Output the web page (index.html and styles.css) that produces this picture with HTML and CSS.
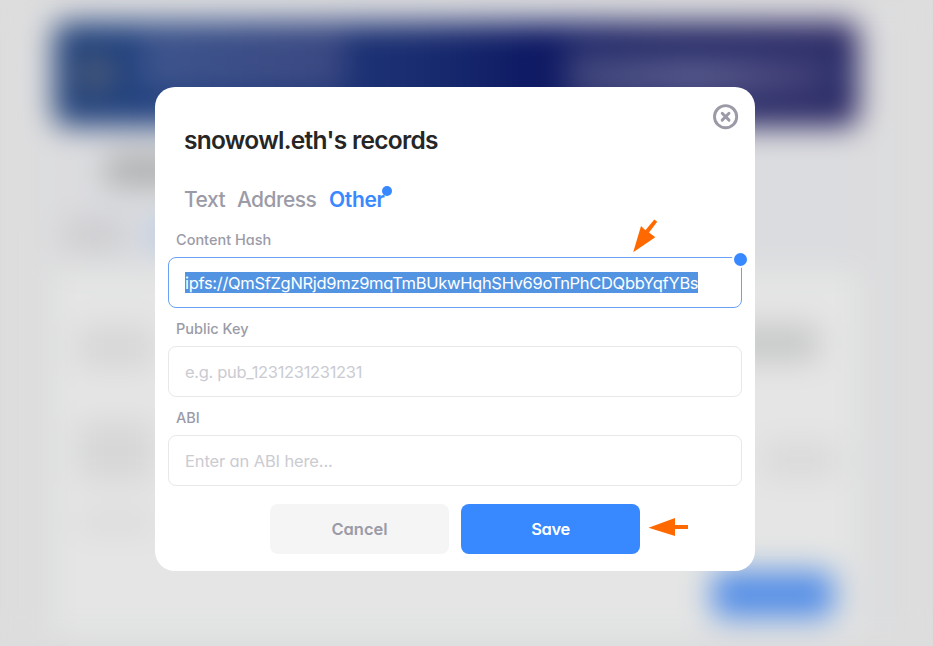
FILE: index.html
```html
<!DOCTYPE html>
<html lang="en">
<head>
<meta charset="utf-8">
<title>snowowl.eth's records</title>
<link rel="stylesheet" href="styles.css">
</head>
<body>
<div class="page" aria-hidden="true">
  <header class="banner"><i class="logo"></i><i class="banner-copy"></i><i class="banner-action"><b></b></i></header>
  <div class="name-row"><i></i></div>
  <div class="tab-row"><i></i><i class="current"></i></div>
  <section class="card">
    <div class="card-row tall"><i></i><i class="dark"></i></div>
    <div class="card-row"><i></i><i></i></div>
    <div class="card-row thin"><i></i></div>
    <div class="card-action"></div>
  </section>
</div>
<div class="overlay">
  <main class="dialog" role="dialog">
    <button class="close" aria-label="Close">
      <svg viewBox="0 0 26 26" width="26" height="26"><circle cx="12.6" cy="12.7" r="11.1"/><path d="M9.2 9.3l6.8 6.8M16 9.3l-6.8 6.8"/></svg>
    </button>
    <h1>snowowl.eth's records</h1>
    <nav class="tabs">
      <span class="tab tab-text">Text</span><span class="tab tab-address">Address</span><span class="tab active">Other<i class="tab-dot"></i></span>
    </nav>
    <div class="field">
      <label>Content Hash</label>
      <div class="input focused"><span class="selected">ipfs://QmSfZgNRjd9mz9mqTmBUkwHqhSHv69oTnPhCDQbbYqfYBs</span><i class="input-dot"></i>
        <svg class="arrow-down" viewBox="0 0 26 34" width="26" height="34"><path d="M1.2 33.2L9 7l4.4 4.2L22.3.4l2.9 2.3-8.2 10.8 6.3 4.8z"/></svg>
      </div>
    </div>
    <div class="field">
      <label>Public Key</label>
      <div class="input"><span class="placeholder hint-key">e.g. pub_1231231231231</span></div>
    </div>
    <div class="field">
      <label>ABI</label>
      <div class="input"><span class="placeholder hint-abi">Enter an ABI here...</span></div>
    </div>
    <footer class="actions">
      <button class="btn cancel">Cancel</button>
      <button class="btn save">Save</button>
      <svg class="arrow-left" viewBox="0 0 40 20" width="40" height="20"><path d="M.5 10.7L27 1v7h13v4H27v7z"/></svg>
    </footer>
  </main>
</div>
</body>
</html>
```
FILE: styles.css
```css
* { box-sizing: border-box; }
body {
  margin: 0;
  width: 933px;
  height: 646px;
  overflow: hidden;
  background: #dddddd;
  font-family: Inter, "Liberation Sans", sans-serif;
  font-feature-settings: "cv11";
}
i, b { display: block; }

/* Blurred page behind the dialog */
.page {
  height: 646px;
  padding: 22px 75px 0 54px;
  filter: blur(15px);
  background: linear-gradient(90deg, #dddddd, #dbdcdf 12%, #dbdcdf 88%, #dddddd);
}
.banner {
  height: 104px;
  border-radius: 10px;
  display: flex;
  align-items: center;
  background: linear-gradient(90deg, #23437a, #1f3f7f 15%, #1a2d70 45%, #0c1762 62%, #1f215f 75%, #27205d);
}
.logo { width: 36px; height: 36px; margin-left: 24px; background: #4f5d78; border-radius: 50%; }
.banner-copy { width: 205px; height: 58px; margin: 0 0 24px 26px; background: linear-gradient(90deg, #3e558d, #3c4882); }
.banner-action { width: 280px; height: 62px; margin-left: auto; margin-right: 16px; padding: 19px 0 0 16px; background: #303772; }
.banner-action b { width: 242px; height: 30px; background: linear-gradient(90deg, #43497d, #5e5f8f 50%, #403970); }
.name-row { padding: 28px 0 0 52px; }
.name-row i { width: 120px; height: 32px; background: #aeafaf; }
.tab-row { display: flex; gap: 22px; padding: 33px 0 0 10px; }
.tab-row i { width: 62px; height: 30px; background: #cdcdd0; }
.tab-row .current { background: #bccde6; }
.card {
  height: 364px;
  margin-top: 21px;
  padding: 55px 20px 0 24px;
  background: #e4e5e4;
  display: flow-root;
}
.card-row { height: 44px; display: flex; justify-content: space-between; }
.card-row i { width: 76px; background: #d7d7d8; }
.card-row .dark { width: 90px; height: 36px; margin-right: 20px; background: #c7c8c8; }
.card-row + .card-row { margin-top: 51px; height: 62px; }
.card-row + .card-row i + i { height: 36px; margin-top: 22px; background: #dadada; }
.card-row + .card-row.thin { height: 24px; margin-top: 28px; }
.thin i { background: #dcdcdc; }
.card-action { width: 122px; height: 47px; margin: 37px 4px 0 auto; border-radius: 10px; background: #568fe6; }

/* Dialog */
.overlay { position: absolute; inset: 0; padding: 87px 0 0 155px; }
.dialog {
  position: relative;
  width: 600px;
  height: 484px;
  padding: 38px 13px 0;
  border-radius: 20px;
  background: #fff;
}
button { border: 0; padding: 0; font: inherit; font-feature-settings: inherit; }
.close { position: absolute; right: 16px; top: 17px; width: 26px; height: 26px; background: none; }
.close svg { display: block; fill: none; stroke: #9b9ba7; stroke-width: 2.9; stroke-linecap: round; }
h1 { margin: 0; padding-left: 16px; font-size: 24.5px; line-height: 30px; font-weight: 600; color: #262626; letter-spacing: -.71px; white-space: nowrap; }
.tabs { height: 30px; margin: 30px 0 0 16px; display: flex; gap: 12px; font-size: 21px; line-height: 30px; font-weight: 500; color: #9b9ba7; }
.tab { position: relative; }
.tab-text { width: 41px; letter-spacing: -.5px; }
.tab-address { width: 80px; letter-spacing: -.6px; }
.active { color: #3888ff; font-weight: 600; letter-spacing: -.35px; }
.tab-dot { position: absolute; left: 53px; top: 1px; width: 10px; height: 10px; border-radius: 50%; background: #3888ff; }
.field { height: 89px; }
.field label { display: block; height: 42px; padding: 15px 0 0 8px; font-size: 14.5px; line-height: 20px; font-weight: 500; color: #9b9ba7; }
.input {
  position: relative;
  height: 51px;
  border: 1px solid #e8e8e8;
  border-radius: 8px;
  padding: 0 16px;
  display: flex;
  align-items: center;
  font-size: 16.5px;
  line-height: 21px;
  white-space: nowrap;
}
.focused { border-color: #69a2f4; }
.selected { height: 21px; line-height: 22px; color: #fff; background: #5294e2; letter-spacing: -.31px; }
.input-dot { position: absolute; right: -8px; top: -7px; width: 17px; height: 17px; border: 2px solid #fff; border-radius: 50%; background: #3888ff; }
.arrow-down { position: absolute; left: 463px; top: -39px; fill: #ff6900; }
.placeholder { padding-top: 1px; color: #cbcbd2; }
.hint-key { letter-spacing: -.32px; }
.hint-abi { letter-spacing: -.13px; }
.actions { display: flex; align-items: center; gap: 12px; margin: 22px 0 0 102px; }
.btn { width: 179px; height: 50px; border-radius: 8px; font-size: 16.5px; font-weight: 600; }
.cancel { background: #f5f5f5; color: #9b9ba7; }
.save { background: #3888ff; color: #fff; letter-spacing: -.4px; }
.arrow-left { margin: -4px 0 0 -4px; fill: #ff6900; }
```
